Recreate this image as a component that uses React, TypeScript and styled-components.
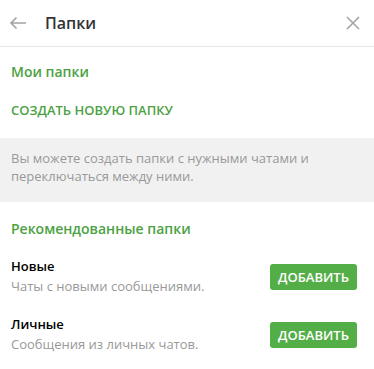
import styled, { createGlobalStyle } from 'styled-components'

const GlobalStyle = createGlobalStyle`
  body {
    margin: 0;
    background: #fff;
    font-family: "Open Sans", "Noto Sans", sans-serif;
  }
`

const folders = [
  { id: 1, name: 'Новые', desc: 'Чаты с новыми сообщениями.' },
  { id: 2, name: 'Личные', desc: 'Сообщения из личных чатов.' },
]

export default function App() {
  return (
    <Panel>
      <GlobalStyle />
      <Header>
        <IconButton aria-label="back">
          <svg width="18" height="14" viewBox="0 0 18 14" fill="none" stroke="#a3a3a3" strokeWidth="1.6">
            <path d="M17 7H2M7.5 1.5L2 7l5.5 5.5" />
          </svg>
        </IconButton>
        <Title>Папки</Title>
        <CloseButton aria-label="close">
          <svg width="14" height="14" viewBox="0 0 14 14" fill="none" stroke="#a3a3a3" strokeWidth="1.6">
            <path d="M1 1l12 12M13 1L1 13" />
          </svg>
        </CloseButton>
      </Header>

      <SectionTitle>Мои папки</SectionTitle>
      <CreateLink>Создать новую папку</CreateLink>

      <Hint>Вы можете создать папки с нужными чатами и переключаться между ними.</Hint>

      <SectionTitle top={17}>Рекомендованные папки</SectionTitle>
      <List>
        {folders.map((f) => (
          <Row key={f.id}>
            <Info>
              <Name>{f.name}</Name>
              <Desc>{f.desc}</Desc>
            </Info>
            <AddButton>Добавить</AddButton>
          </Row>
        ))}
      </List>
    </Panel>
  )
}

const Panel = styled.div`
  width: 374px;
  min-height: 369px;
  background: #fff;
`

const Header = styled.div`
  display: flex;
  align-items: center;
  height: 46px;
  border-bottom: 1px solid #e8e8e8;
  padding: 0 15px 0 9px;
`

const IconButton = styled.div`
  display: flex;
  align-items: center;
  width: 36px;
  height: 36px;
`

const CloseButton = styled(IconButton)`
  margin-left: auto;
  justify-content: flex-end;
  margin-right: -1px;
`

const Title = styled.div`
  font-size: 16px;
  font-weight: 600;
  color: #333;
`

const SectionTitle = styled.div<{ top?: number }>`
  padding: ${(p) => p.top ?? 15}px 11px 0;
  line-height: 20px;
  font-size: 14px;
  font-weight: 600;
  color: #4ca243;
`

const CreateLink = styled.div`
  display: flex;
  align-items: center;
  height: 56px;
  padding: 0 11px;
  font-size: 13px;
  font-weight: 600;
  color: #4ca243;
  text-transform: uppercase;
`

const Hint = styled.div`
  background: #f1f1f1;
  padding: 11px 11px 17px;
  font-size: 13px;
  line-height: 18px;
  color: #999;
`

const List = styled.div`
  display: flex;
  flex-direction: column;
  gap: 17px;
  padding: 17px 17px 0 11px;
`

const Row = styled.div`
  display: flex;
  align-items: center;
  justify-content: space-between;
`

const Info = styled.div`
  display: flex;
  flex-direction: column;
`

const Name = styled.div`
  font-size: 13px;
  font-weight: 600;
  line-height: 20px;
  color: #000;
`

const Desc = styled.div`
  font-size: 13px;
  line-height: 21px;
  color: #999;
`

const AddButton = styled.div`
  display: flex;
  align-items: center;
  justify-content: center;
  width: 87px;
  height: 26px;
  border-radius: 3px;
  background: #54ae47;
  color: #fff;
  font-size: 13px;
  font-weight: 600;
  text-transform: uppercase;
`
